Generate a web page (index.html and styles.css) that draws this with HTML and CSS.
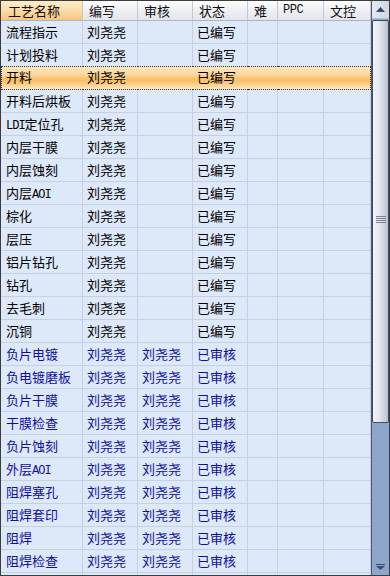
FILE: index.html
```html
<!DOCTYPE html>
<html>
<head>
<meta charset="utf-8">
<link rel="stylesheet" href="styles.css">
</head>
<body>
<div class="frame">
  <div class="grid">
    <div class="row head">
      <div class="c c1 sorted">工艺名称</div>
      <div class="c c2">编写</div>
      <div class="c c3">审核</div>
      <div class="c c4">状态</div>
      <div class="c c5">难</div>
      <div class="c c6 mono">PPC</div>
      <div class="c c7">文控</div>
    </div>
    <div class="row"><div class="c c1">流程指示</div><div class="c c2">刘尧尧</div><div class="c c3"></div><div class="c c4">已编写</div><div class="c c5"></div><div class="c c6"></div><div class="c c7"></div></div>
    <div class="row"><div class="c c1">计划投料</div><div class="c c2">刘尧尧</div><div class="c c3"></div><div class="c c4">已编写</div><div class="c c5"></div><div class="c c6"></div><div class="c c7"></div></div>
    <div class="row sel"><div class="c c1">开料</div><div class="c c2">刘尧尧</div><div class="c c3"></div><div class="c c4">已编写</div><div class="c c5"></div><div class="c c6"></div><div class="c c7"></div></div>
    <div class="row"><div class="c c1">开料后烘板</div><div class="c c2">刘尧尧</div><div class="c c3"></div><div class="c c4">已编写</div><div class="c c5"></div><div class="c c6"></div><div class="c c7"></div></div>
    <div class="row"><div class="c c1"><span class="mono">LDI</span>定位孔</div><div class="c c2">刘尧尧</div><div class="c c3"></div><div class="c c4">已编写</div><div class="c c5"></div><div class="c c6"></div><div class="c c7"></div></div>
    <div class="row"><div class="c c1">内层干膜</div><div class="c c2">刘尧尧</div><div class="c c3"></div><div class="c c4">已编写</div><div class="c c5"></div><div class="c c6"></div><div class="c c7"></div></div>
    <div class="row"><div class="c c1">内层蚀刻</div><div class="c c2">刘尧尧</div><div class="c c3"></div><div class="c c4">已编写</div><div class="c c5"></div><div class="c c6"></div><div class="c c7"></div></div>
    <div class="row"><div class="c c1">内层<span class="mono">AOI</span></div><div class="c c2">刘尧尧</div><div class="c c3"></div><div class="c c4">已编写</div><div class="c c5"></div><div class="c c6"></div><div class="c c7"></div></div>
    <div class="row"><div class="c c1">棕化</div><div class="c c2">刘尧尧</div><div class="c c3"></div><div class="c c4">已编写</div><div class="c c5"></div><div class="c c6"></div><div class="c c7"></div></div>
    <div class="row"><div class="c c1">层压</div><div class="c c2">刘尧尧</div><div class="c c3"></div><div class="c c4">已编写</div><div class="c c5"></div><div class="c c6"></div><div class="c c7"></div></div>
    <div class="row"><div class="c c1">铝片钻孔</div><div class="c c2">刘尧尧</div><div class="c c3"></div><div class="c c4">已编写</div><div class="c c5"></div><div class="c c6"></div><div class="c c7"></div></div>
    <div class="row"><div class="c c1">钻孔</div><div class="c c2">刘尧尧</div><div class="c c3"></div><div class="c c4">已编写</div><div class="c c5"></div><div class="c c6"></div><div class="c c7"></div></div>
    <div class="row"><div class="c c1">去毛刺</div><div class="c c2">刘尧尧</div><div class="c c3"></div><div class="c c4">已编写</div><div class="c c5"></div><div class="c c6"></div><div class="c c7"></div></div>
    <div class="row"><div class="c c1">沉铜</div><div class="c c2">刘尧尧</div><div class="c c3"></div><div class="c c4">已编写</div><div class="c c5"></div><div class="c c6"></div><div class="c c7"></div></div>
    <div class="row rev"><div class="c c1">负片电镀</div><div class="c c2">刘尧尧</div><div class="c c3">刘尧尧</div><div class="c c4">已审核</div><div class="c c5"></div><div class="c c6"></div><div class="c c7"></div></div>
    <div class="row rev"><div class="c c1">负电镀磨板</div><div class="c c2">刘尧尧</div><div class="c c3">刘尧尧</div><div class="c c4">已审核</div><div class="c c5"></div><div class="c c6"></div><div class="c c7"></div></div>
    <div class="row rev"><div class="c c1">负片干膜</div><div class="c c2">刘尧尧</div><div class="c c3">刘尧尧</div><div class="c c4">已审核</div><div class="c c5"></div><div class="c c6"></div><div class="c c7"></div></div>
    <div class="row rev"><div class="c c1">干膜检查</div><div class="c c2">刘尧尧</div><div class="c c3">刘尧尧</div><div class="c c4">已审核</div><div class="c c5"></div><div class="c c6"></div><div class="c c7"></div></div>
    <div class="row rev"><div class="c c1">负片蚀刻</div><div class="c c2">刘尧尧</div><div class="c c3">刘尧尧</div><div class="c c4">已审核</div><div class="c c5"></div><div class="c c6"></div><div class="c c7"></div></div>
    <div class="row rev"><div class="c c1">外层<span class="mono">AOI</span></div><div class="c c2">刘尧尧</div><div class="c c3">刘尧尧</div><div class="c c4">已审核</div><div class="c c5"></div><div class="c c6"></div><div class="c c7"></div></div>
    <div class="row rev"><div class="c c1">阻焊塞孔</div><div class="c c2">刘尧尧</div><div class="c c3">刘尧尧</div><div class="c c4">已审核</div><div class="c c5"></div><div class="c c6"></div><div class="c c7"></div></div>
    <div class="row rev"><div class="c c1">阻焊套印</div><div class="c c2">刘尧尧</div><div class="c c3">刘尧尧</div><div class="c c4">已审核</div><div class="c c5"></div><div class="c c6"></div><div class="c c7"></div></div>
    <div class="row rev"><div class="c c1">阻焊</div><div class="c c2">刘尧尧</div><div class="c c3">刘尧尧</div><div class="c c4">已审核</div><div class="c c5"></div><div class="c c6"></div><div class="c c7"></div></div>
    <div class="row rev"><div class="c c1">阻焊检查</div><div class="c c2">刘尧尧</div><div class="c c3">刘尧尧</div><div class="c c4">已审核</div><div class="c c5"></div><div class="c c6"></div><div class="c c7"></div></div>
    <div class="row rev"><div class="c c1"></div><div class="c c2"></div><div class="c c3"></div><div class="c c4"></div><div class="c c5"></div><div class="c c6"></div><div class="c c7"></div></div>
  </div>
  <div class="scroll">
    <div class="sb-up">
      <svg width="9" height="5" viewBox="0 0 9 5"><polygon points="0,5 9,5 4.5,0" fill="#3a4a68"/></svg>
    </div>
    <div class="sb-thumb">
      <div class="grip"><i></i><i></i><i></i><i></i></div>
    </div>
    <div class="sb-track"></div>
    <div class="sb-down">
      <svg width="9" height="6" viewBox="0 0 9 6"><rect x="0" y="0" width="9" height="1" fill="#3a4a68"/><polygon points="0,2 9,2 4.5,6" fill="#3a4a68"/></svg>
    </div>
  </div>
</div>
</body>
</html>
```
FILE: styles.css
```css
html, body {
  margin: 0;
  padding: 0;
  background: #ffffff;
}
.frame {
  box-sizing: border-box;
  width: 390px;
  height: 576px;
  border: 1px solid #3c3c3c;
  display: flex;
  overflow: hidden;
  background: #dde8f8;
  font-family: "Noto Sans CJK SC", "Noto Sans", sans-serif;
  font-size: 13px;
  color: #000;
}
.grid {
  width: 370px;
  flex: none;
  overflow: hidden;
}
.row {
  display: grid;
  grid-template-columns: 82px 55px 55px 55px 30px 46px 47px;
  height: 23px;
}
.c {
  box-sizing: border-box;
  border-right: 1px solid #c5d1e2;
  border-bottom: 1px solid #c5d1e2;
  padding-left: 4px;
  line-height: 22px;
  white-space: nowrap;
  overflow: hidden;
}
.c1 { padding-left: 5px; }
.mono {
  font-family: "Liberation Mono", "DejaVu Sans Mono", monospace;
  font-size: 12px;
  letter-spacing: -1px;
}
.head {
  height: 20px;
}
.head .c {
  line-height: 19px;
  padding-left: 6px;
  background: linear-gradient(#fdfdfe 0%, #eef0f4 50%, #e2e5ec 100%);
  border-right: 1px solid #c4c8d0;
  border-bottom: 1px solid #aeb4c0;
  color: #111;
}
.head .c.mono {
  font-size: 12px;
  letter-spacing: -0.5px;
  padding-left: 5px;
}
.head .c.sorted {
  background: linear-gradient(#fdeccd 0%, #fbdca8 50%, #f7c57a 100%);
  padding-left: 7px;
}
.rev .c {
  color: #10109c;
}
.sel .c {
  background: linear-gradient(#fde7c2 0%, #fcd79a 35%, #f9bd62 60%, #fbd59a 85%, #fde6be 100%);
  border-right: none;
  border-top: 1px dotted #333;
  border-bottom: 1px dotted #333;
  line-height: 20px;
  margin-top: -1px;
  height: 24px;
}
.sel .c7 {
  border-right: 1px dotted #333;
}
.sel .c1 {
  border-left: 1px dotted #333;
  padding-left: 4px;
}
.scroll {
  flex: 1;
  display: flex;
  flex-direction: column;
  border-left: 1px solid #4a5878;
  background: #8ea6cc;
}
.sb-up {
  height: 17px;
  flex: none;
  display: flex;
  align-items: center;
  justify-content: center;
  background: linear-gradient(90deg, #e4e9f1, #cfd7e4);
  border-bottom: 1px solid #b6c0d0;
}
.sb-thumb {
  height: 403px;
  flex: none;
  box-sizing: border-box;
  border: 1px solid #3e4a68;
  border-radius: 2px;
  margin-top: 1px;
  background: linear-gradient(90deg, #f2f4f8 0%, #e4e8ef 40%, #cdd4df 75%, #b8c1d0 100%);
  display: flex;
  align-items: center;
  justify-content: center;
}
.grip {
  display: flex;
  flex-direction: column;
  gap: 1px;
  margin-top: -4px;
}
.grip i {
  display: block;
  width: 10px;
  height: 1px;
  background: #7b8494;
}
.sb-track {
  flex: 1;
}
.sb-down {
  height: 16px;
  flex: none;
  display: flex;
  align-items: center;
  justify-content: center;
  padding-right: 1px;
}
```
